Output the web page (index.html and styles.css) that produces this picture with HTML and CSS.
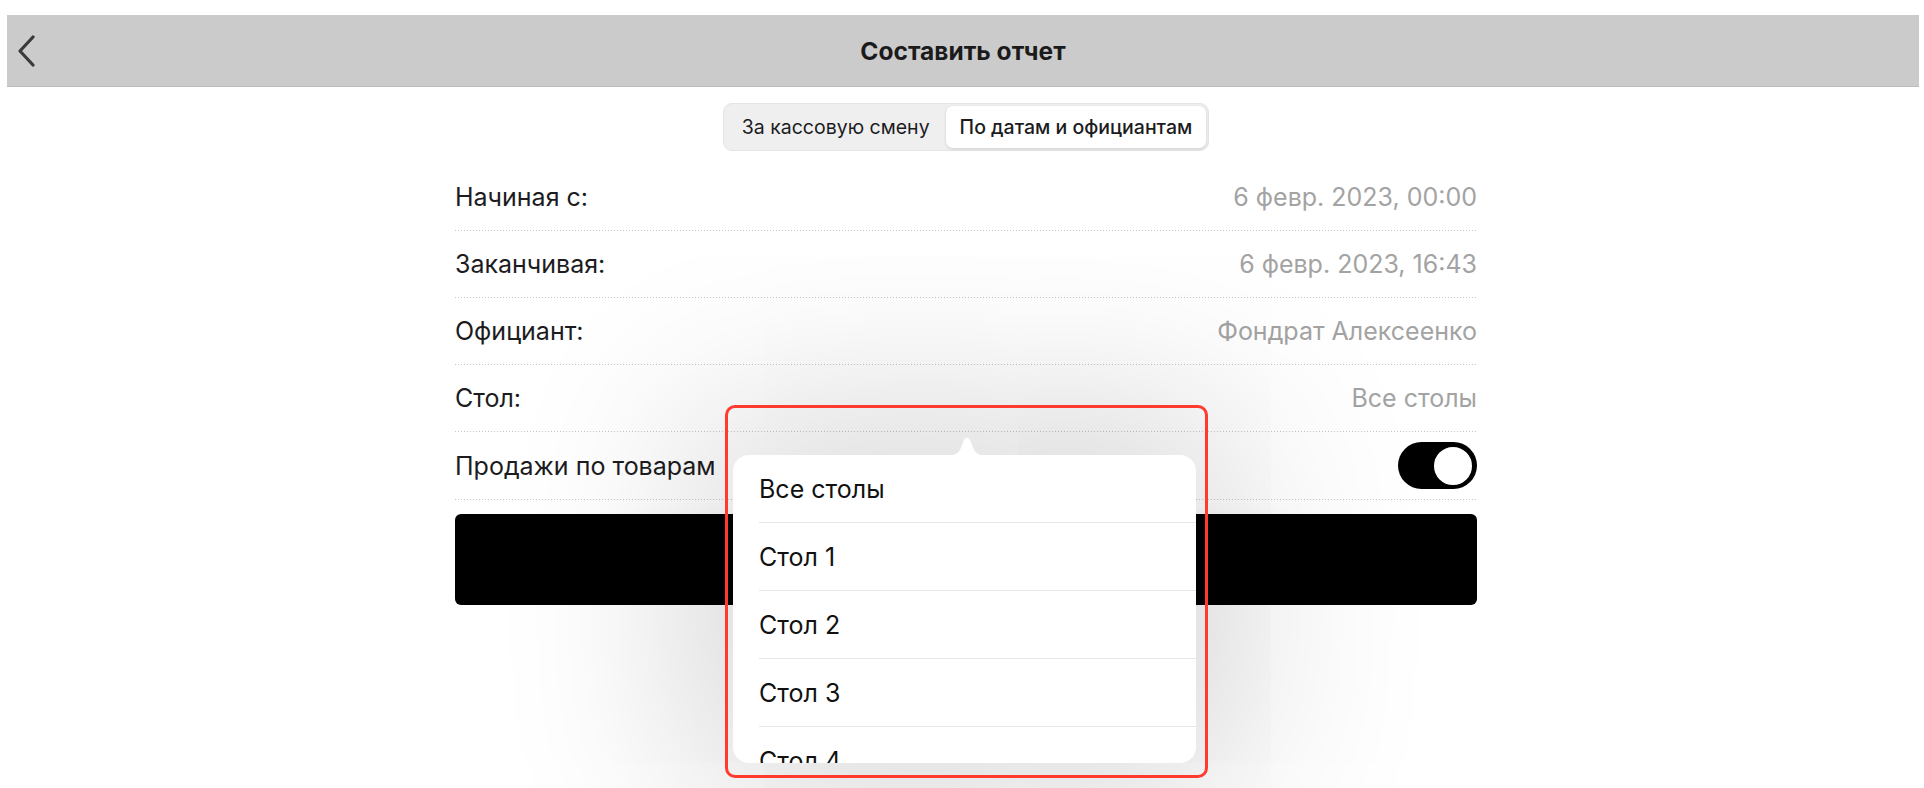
FILE: index.html
```html
<!DOCTYPE html>
<html lang="ru">
<head>
    <meta charset="UTF-8">
    <meta name="viewport" content="width=device-width, initial-scale=1.0">
    <title>Составить отчет</title>
    <link rel="stylesheet" href="styles.css">
</head>
<body>

    <header class="topbar">
        <button class="back" aria-label="Назад">
            <svg width="20" height="32" viewBox="0 0 20 32">
                <path d="M16 2 L3 16 L16 30" fill="none" stroke="#3a3a3a" stroke-width="3.2" stroke-linecap="round" stroke-linejoin="round"/>
            </svg>
        </button>
        <h1 class="title">Составить отчет</h1>
        <span></span>
    </header>

    <main class="report">
        <div class="tabs-row">
            <div class="tabs">
                <span class="tab">За кассовую смену</span>
                <span class="tab active">По датам и официантам</span>
            </div>
        </div>

        <div class="form">
            <div class="row">
                <span class="label">Начиная с:</span>
                <span class="value">6 февр. 2023, 00:00</span>
            </div>
            <div class="row">
                <span class="label">Заканчивая:</span>
                <span class="value">6 февр. 2023, 16:43</span>
            </div>
            <div class="row">
                <span class="label">Официант:</span>
                <span class="value">Фондрат Алексеенко</span>
            </div>
            <div class="row">
                <span class="label">Стол:</span>
                <span class="value">Все столы</span>
            </div>
            <div class="row row-toggle">
                <span class="label">Продажи по товарам</span>
                <span class="switch on"><span class="knob"></span></span>
            </div>

            <button class="submit"></button>

            <!-- table picker popover -->
            <div class="popover">
                <svg class="arrow" width="44" height="21" viewBox="0 0 44 21">
                    <path d="M0 21 C9 21 12 19 15 15 L19 5 Q22 0 25 5 L29 15 C32 19 35 21 44 21 Z" fill="#fff"/>
                </svg>
                <div class="card">
                    <div class="option">Все столы</div>
                    <div class="option">Стол 1</div>
                    <div class="option">Стол 2</div>
                    <div class="option">Стол 3</div>
                    <div class="option">Стол 4</div>
                </div>
            </div>
            <div class="highlight"></div>
        </div>
    </main>

</body>
</html>
```

FILE: styles.css
```css
html, body {
    height: 100%;
}
body {
    margin: 0;
    min-height: 788px;
    background: #fff;
    font-family: Inter, "Liberation Sans", sans-serif;
    color: #1c1c1e;
}

/* Top bar */
.topbar {
    margin: 15px 5px 0 7px;
    height: 71px;
    background: #cbcbcc;
    border-bottom: 1px solid #bcbcbd;
    display: grid;
    grid-template-columns: 1fr auto 1fr;
    align-items: center;
}
.back {
    justify-self: start;
    background: none;
    border: none;
    padding: 0 0 0 10px;
    cursor: pointer;
    display: flex;
}
.title {
    margin: 0;
    font-size: 24.5px;
    font-weight: 700;
    color: #1b1b1b;
}

.report {
    padding-left: 8px;
}

/* Segmented control */
.tabs-row {
    display: flex;
    justify-content: center;
    margin-top: 16px;
}
.tabs {
    display: flex;
    height: 48px;
    box-sizing: border-box;
    padding: 2px;
    background: #efeff0;
    border: 1px solid #e4e4e5;
    border-radius: 9px;
}
.tab {
    display: flex;
    align-items: center;
    padding: 0 16px;
    font-size: 19.5px;
    color: #1c1c1e;
    border-radius: 7px;
}
.tab.active {
    padding: 0 14px;
    font-weight: 500;
    background: #fff;
    box-shadow: 0 1px 3px rgba(0, 0, 0, 0.14);
}

/* Form */
.form {
    position: relative;
    width: 1022px;
    margin: 13px auto 0;
}
.row {
    display: flex;
    justify-content: space-between;
    align-items: center;
    height: 67px;
    box-sizing: border-box;
    padding-bottom: 1px;
    font-size: 25px;
    background: linear-gradient(to right, #c6c6c6 1px, transparent 1px) repeat-x left bottom / 3px 1px;
}
.row-toggle { height: 68px; }
.value { color: #a3a3a3; }

.switch {
    width: 79px;
    height: 47px;
    box-sizing: border-box;
    border-radius: 24px;
    background: #000;
    display: flex;
    align-items: center;
    justify-content: flex-end;
    padding: 0 3px;
}
.knob {
    width: 42px;
    height: 42px;
    box-sizing: border-box;
    border-radius: 50%;
    background: #fff;
    border: 2px solid #000;
}

.submit {
    display: block;
    width: 100%;
    height: 91px;
    margin-top: 14px;
    background: #000;
    border: none;
    border-radius: 6px;
}

/* Popover */
.popover {
    position: absolute;
    left: 278px;
    top: 271px;
    width: 463px;
}
.arrow {
    position: absolute;
    top: 0;
    left: 212px;
    z-index: 2;
}
.card {
    position: relative;
    z-index: 1;
    margin-top: 20px;
    height: 308px;
    overflow: hidden;
    background: #fff;
    border-radius: 16px;
    box-shadow: 0 0 190px 45px rgba(0, 0, 0, 0.16);
}
.option {
    margin-left: 26px;
    height: 67px;
    display: flex;
    align-items: center;
    font-size: 25px;
    color: #111;
    border-bottom: 1px solid #e6e6e6;
}

.highlight {
    position: absolute;
    left: 270px;
    top: 241px;
    width: 483px;
    height: 373px;
    box-sizing: border-box;
    border: 3px solid #ff3b30;
    border-radius: 10px;
    z-index: 3;
}
```
